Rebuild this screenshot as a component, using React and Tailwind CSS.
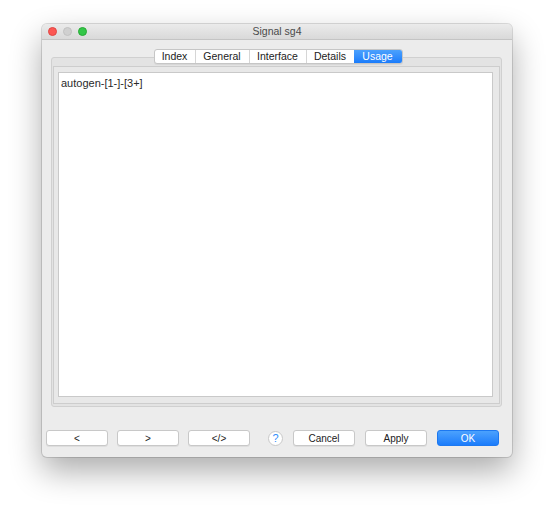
import React from "react";

const font = { fontFamily: '"Liberation Sans", Arial, sans-serif' };

function Btn({ children, className = "" }) {
  return (
    <div
      className={`h-[16px] w-[62px] flex items-center justify-center rounded-[3px] bg-white border border-[#c8c8c8] shadow-[0_1px_0_rgba(0,0,0,0.06)] text-[10px] text-[#222] ${className}`}
    >
      {children}
    </div>
  );
}

export default function App() {
  const tabs = [
    { label: "Index", w: "w-[40px]" },
    { label: "General", w: "w-[54px]" },
    { label: "Interface", w: "w-[57px]" },
    { label: "Details", w: "w-[48px]" },
    { label: "Usage", w: "w-[48px]", active: true },
  ];
  return (
    <div className="w-[554px] h-[517px] bg-white pl-[42px] pt-[24px]" style={font}>
      <div className="w-[470px] h-[433px] bg-[#ececec] rounded-[5px] flex flex-col shadow-[0_14px_32px_rgba(0,0,0,0.33),0_0_0_1px_rgba(0,0,0,0.13)]">
        {/* Title bar */}
        <div className="relative h-[16px] rounded-t-[5px] bg-gradient-to-b from-[#ebebeb] to-[#d9d9d9] border-b border-[#c4c4c4] flex items-center justify-center">
          <div className="absolute left-[6px] top-[3px] flex gap-[6px]">
            <div className="w-[9px] h-[9px] rounded-full bg-[#fc5753] border border-[#df4744]" />
            <div className="w-[9px] h-[9px] rounded-full bg-[#d0d0d0] border border-[#c2c2c2]" />
            <div className="w-[9px] h-[9px] rounded-full bg-[#33c748] border border-[#27aa35]" />
          </div>
          <span className="text-[10.5px] text-[#4a4a4a] leading-none">Signal sg4</span>
        </div>

        {/* Tabs */}
        <div className="mt-[9px] flex justify-center relative z-10 -mb-[7px] pl-[2px]">
          <div className="flex h-[15px] rounded-[3px] border border-[#c6c6c6] bg-white shadow-[0_1px_0_rgba(0,0,0,0.05)] overflow-hidden">
            {tabs.map((t, i) => (
              <div
                key={t.label}
                className={`${t.w} flex items-center justify-center text-[10.5px] leading-none ${
                  t.active
                    ? "bg-gradient-to-b from-[#4ba1fd] to-[#1a7cfb] text-white"
                    : "text-[#222]"
                } ${i > 0 && !t.active ? "border-l border-[#d6d6d6]" : ""}`}
              >
                {t.label}
              </div>
            ))}
          </div>
        </div>

        {/* Tab box */}
        <div className="ml-[9px] w-[451px] h-[350px] border border-[#d0d0d0] rounded-[3px] bg-[#e3e3e3] pt-[8px] px-[1px] pb-[2px]">
          <div className="h-full border border-[#cdcdcd] bg-[#e8e8e8] pt-[5px] pl-[4px] pr-[6px] pb-[6px]">
            <div className="h-full bg-white border border-[#c9c9c9] px-[2px] pt-[3px]">
              <div className="text-[11px] text-[#2a2a2a] leading-[14px]">autogen-[1-]-[3+]</div>
            </div>
          </div>
        </div>

        {/* Buttons */}
        <div className="mt-[23px] ml-[4px] flex items-center">
          <Btn>&lt;</Btn>
          <Btn className="ml-[9px]">&gt;</Btn>
          <Btn className="ml-[9px]">&lt;/&gt;</Btn>
          <div className="ml-[18px] w-[15px] h-[15px] rounded-full bg-white border border-[#c8c8c8] flex items-center justify-center text-[11px] text-[#2f8cf9] leading-none">
            ?
          </div>
          <Btn className="ml-[10px]">Cancel</Btn>
          <Btn className="ml-[10px]">Apply</Btn>
          <div className="ml-[10px] h-[16px] w-[62px] flex items-center justify-center rounded-[3px] bg-gradient-to-b from-[#4ba1fd] to-[#1a7cfb] border border-[#1d78f0] text-[10px] text-white">
            OK
          </div>
        </div>
      </div>
    </div>
  );
}
